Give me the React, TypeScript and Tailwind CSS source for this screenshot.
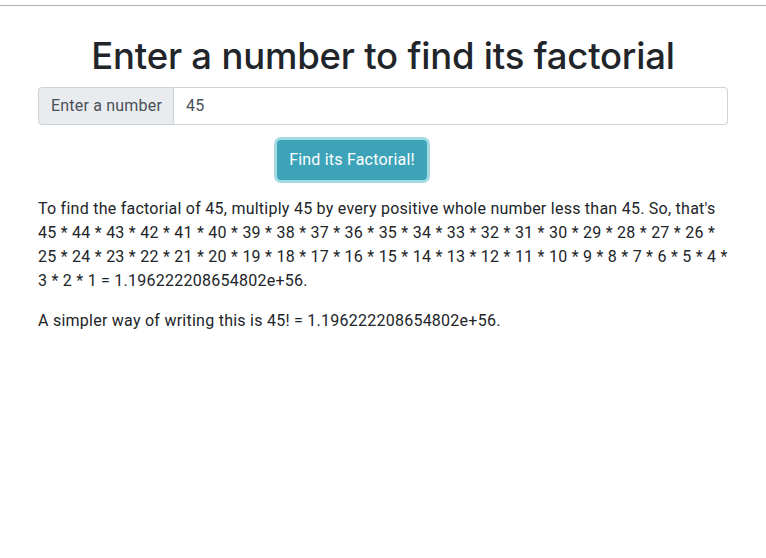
import { useState } from "react";

function factorialText(n: number) {
  let result = 1;
  const parts: number[] = [];
  for (let i = n; i >= 1; i--) {
    result *= i;
    parts.push(i);
  }
  return { chain: parts.join(" * "), result: String(result) };
}

export default function App() {
  const [value, setValue] = useState("45");
  const [shown, setShown] = useState(45);

  const { chain, result } = factorialText(shown);
  const explain = `To find the factorial of ${shown}, multiply ${shown} by every positive whole number less than ${shown}. So, that's ${chain} = ${result}.`;
  const simple = `A simpler way of writing this is ${shown}! = ${result}.`;

  return (
    <div
      className="min-h-[558px] bg-white text-[#212529]"
      style={{ fontFamily: "Roboto, 'Noto Sans', sans-serif" }}
    >
      <div className="h-[6px] border-b border-[#b0b0b0]" />
      <main className="mx-auto w-[690px]">
        <h1
          className="mt-[29px] text-center text-[36.5px] font-medium leading-[1.2] tracking-[-0.2px]"
          style={{ fontFamily: "Inter, sans-serif" }}
        >
          Enter a number to find its factorial
        </h1>

        <div className="mt-[8px] flex h-[38px] text-[16px] tracking-[0.2px]">
          <span className="flex w-[136px] shrink-0 items-center whitespace-nowrap rounded-l-[4px] border border-[#ced4da] bg-[#e9ecef] px-3 text-[#495057]">
            Enter a number
          </span>
          <input
            className="min-w-0 flex-1 rounded-r-[4px] border border-l-0 border-[#ced4da] px-3 text-[#495057] outline-none"
            value={value}
            onChange={(e) => setValue(e.target.value)}
          />
        </div>

        <div className="mt-[15px] pl-[239px]">
          <button
            onClick={() => setShown(parseInt(value, 10) || 0)}
            className="h-[40px] w-[150px] rounded-[4px] bg-[#3da3b8] text-[16px] tracking-[0.2px] text-white shadow-[0_0_0_3px_rgba(23,162,184,0.4)]"
          >
            Find its Factorial!
          </button>
        </div>

        <p className="mt-[17px] text-[16px] leading-[24px] tracking-[0.25px]">
          {explain}
        </p>
        <p className="mt-[16px] text-[16px] leading-[24px] tracking-[0.25px]">
          {simple}
        </p>
      </main>
    </div>
  );
}
